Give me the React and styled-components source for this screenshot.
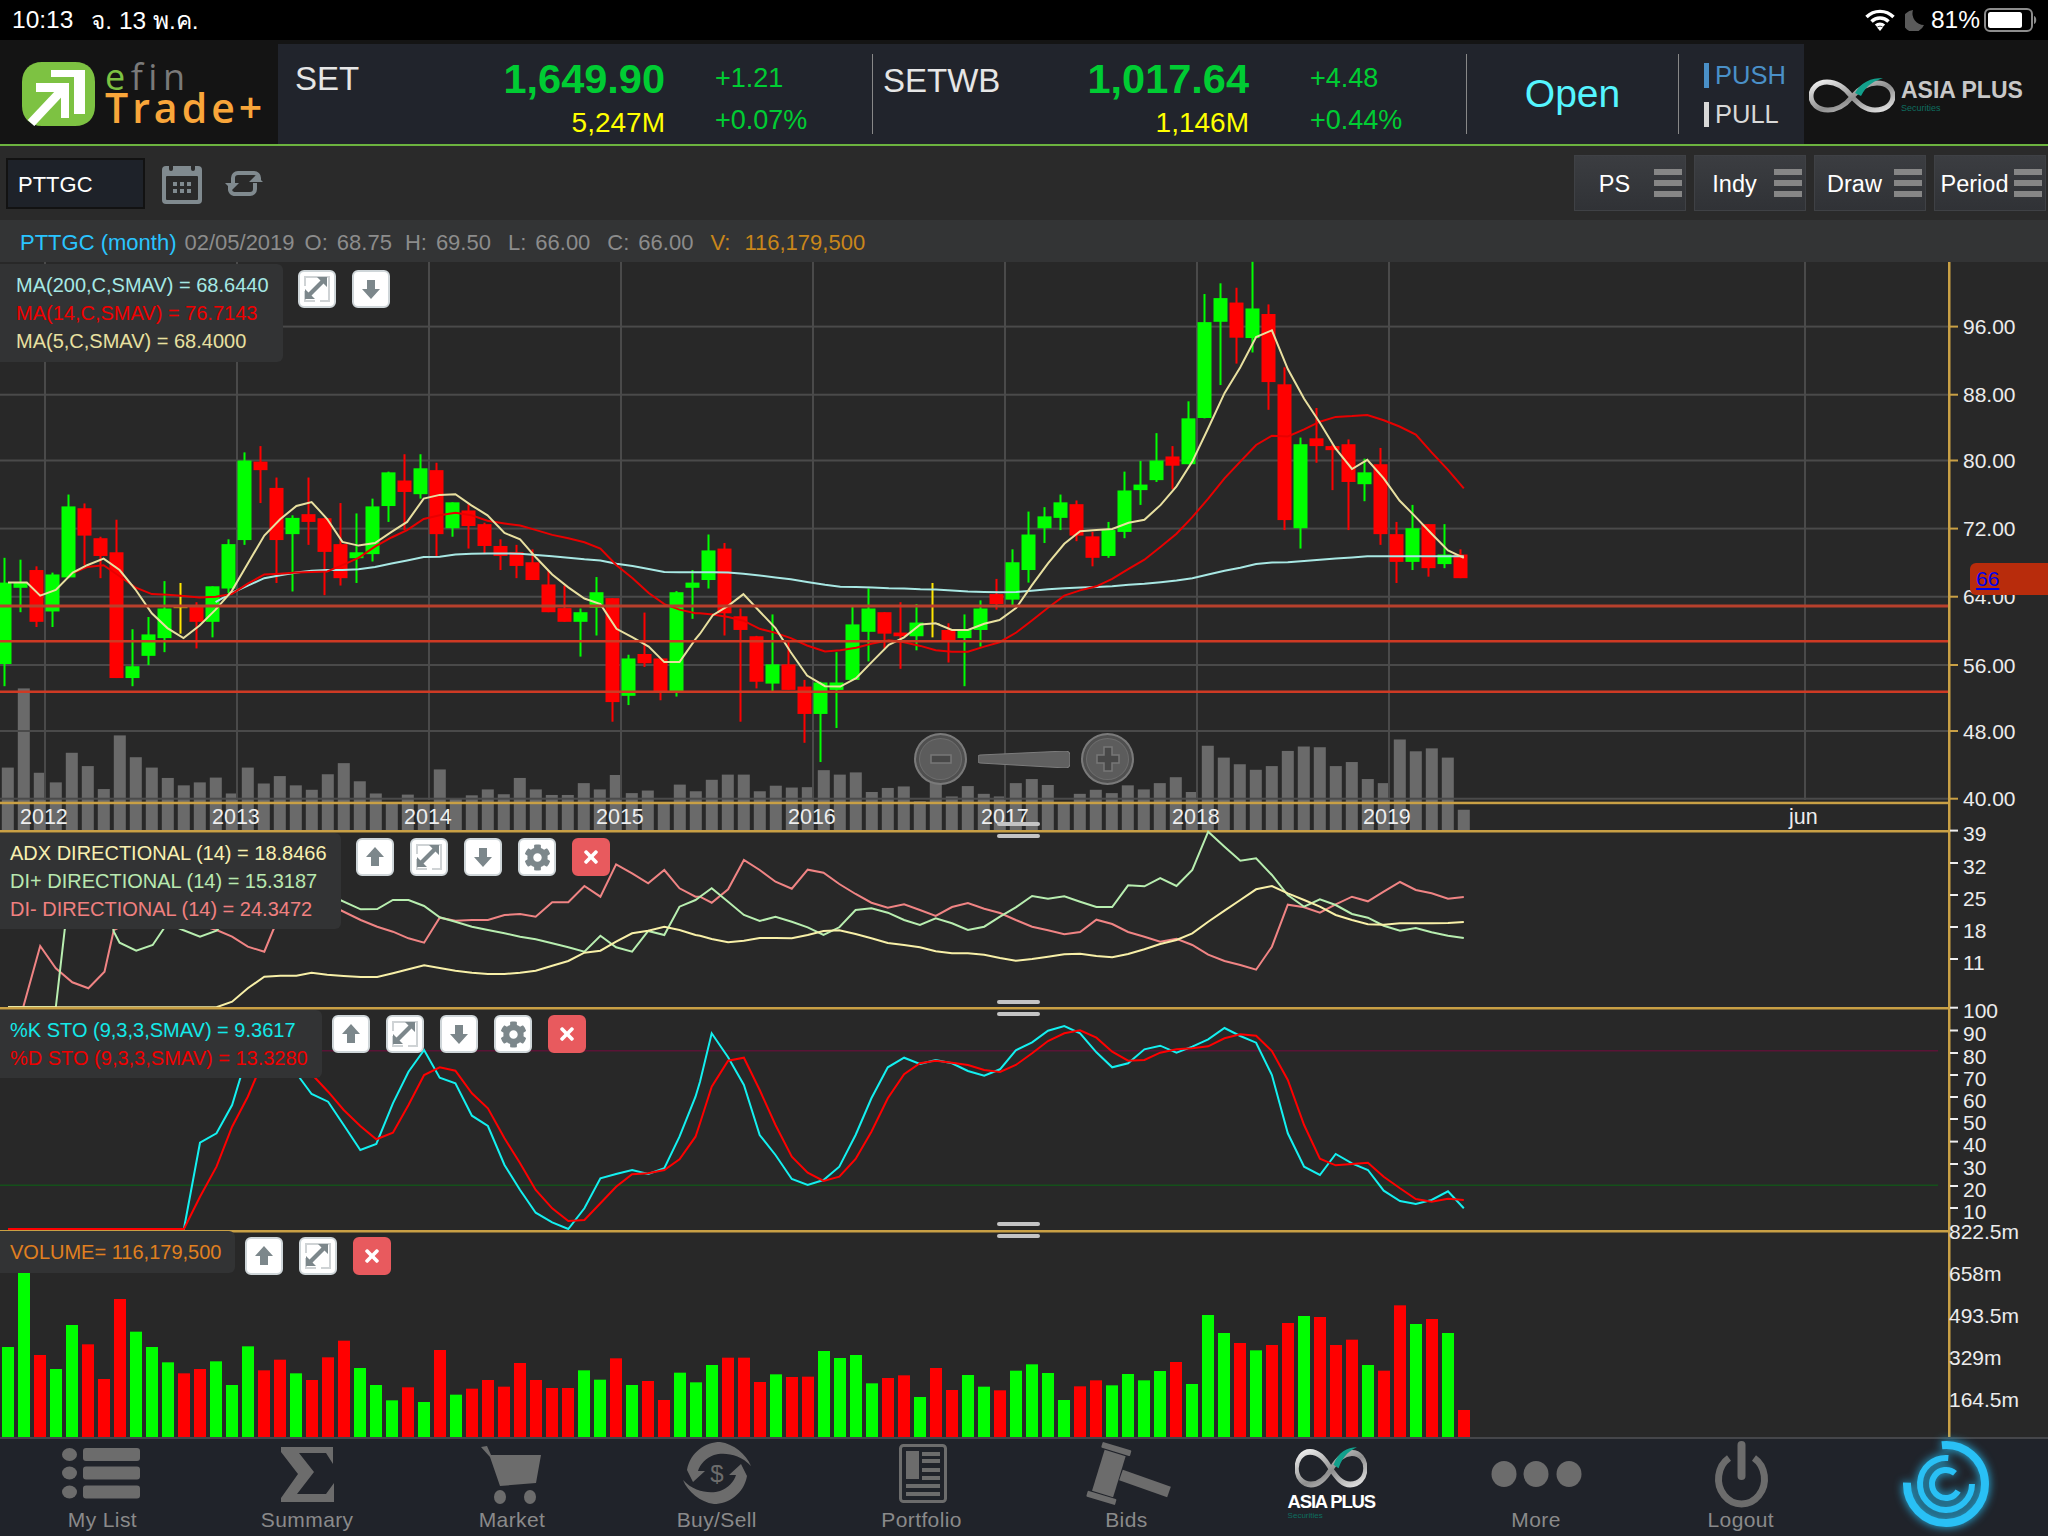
import React from "react";
import styled, { createGlobalStyle } from "styled-components";
import { FaCog, FaTimes } from "react-icons/fa";

const GlobalStyle = createGlobalStyle`
  html, body {
    margin: 0;
    padding: 0;
    background: #000;
  }
  body {
    font-family: "Liberation Sans", "Noto Sans", sans-serif;
  }
`;

/* ---------- chart data, read off the chart in crop units ---------- */

// [colour, wick top, body top, body bottom, wick bottom]
const CANDLES = [
  ["g",805,872,1092,1152],["g",810,872,886,952],["r",828,838,978,992],["g",845,850,950,992],
  ["g",634,666,858,860],["r",658,671,745,825],["r",748,752,800,860],["r",702,790,1130,1130],
  ["g",998,1098,1130,1152],["g",965,1012,1070,1095],["g",868,942,1022,1060],["y",873,939,941,1010],
  ["r",925,935,978,1050],["g",882,882,978,1020],["g",755,768,888,900],["g",520,542,757,770],
  ["r",503,545,568,657],["r",588,616,757,873],["g",690,697,741,896],["r",588,687,708,770],
  ["r",698,698,789,906],["r",657,768,860,880],["g",685,790,806,873],["g",645,666,795,815],
  ["g",572,574,665,708],["r",525,596,627,730],["g",525,563,633,645],["r",548,568,741,800],
  ["g",655,655,725,748],["r",660,677,719,780],["r",710,714,773,795],["r",755,773,800,838],
  ["r",770,790,827,860],["r",782,817,865,865],["r",840,877,952,952],["r",880,941,978,978],
  ["g",942,952,978,1072],["g",857,898,940,1015],["r",914,914,1195,1248],["g",1067,1077,1178,1203],
  ["r",953,1065,1090,1100],["r",1077,1077,1170,1190],["g",895,898,1170,1180],["g",838,872,886,970],
  ["g",742,785,865,888],["r",765,780,955,1015],["r",942,963,1000,1248],["r",1016,1017,1140,1158],
  ["g",958,1093,1145,1165],["r",1030,1093,1162,1162],["r",1135,1153,1227,1305],["g",1140,1142,1227,1357],
  ["g",1060,1142,1162,1265],["g",938,985,1135,1135],["g",888,942,1005,1085],["r",952,952,1010,1050],
  ["r",925,1007,1017,1105],["g",930,980,1017,1055],["y",873,982,984,1020],["r",982,1000,1028,1088],
  ["g",958,998,1022,1152],["g",920,942,1000,1045],["r",862,903,930,945],["g",782,817,918,935],
  ["g",680,742,838,872],["g",668,693,725,765],["g",634,655,697,730],["r",650,660,745,760],
  ["r",735,747,805,828],["g",708,730,800,805],["g",572,623,735,752],["g",543,607,622,662],
  ["g",468,542,595,600],["r",503,531,556,620],["g",382,428,552,552],["g",92,168,427,428],
  ["g",63,103,167,338],["r",75,115,210,280],["g",5,131,211,250],["r",120,146,330,405],
  ["r",290,336,703,730],["g",480,498,725,780],["r",400,482,503,548],["r",498,503,514,622],
  ["r",485,498,600,730],["g",537,574,606,652],["r",508,552,741,770],["r",708,741,816,873],
  ["g",662,725,816,838],["r",714,714,833,856],["g",714,796,822,833],["r",782,796,860,860],
];

const MAIN_VOLUME = [
  1372,1158,1386,1412,1332,1368,1430,1285,1344,1372,1400,1420,1412,1399,1442,1372,1415,1395,1420,1432,1390,1360,
  1409,1442,1470,1445,1470,1377,1456,1447,1431,1444,1400,1431,1446,1446,1414,1431,1392,1441,1434,1470,1418,1436,
  1405,1391,1391,1436,1421,1426,1425,1379,1391,1385,1438,1427,1423,1463,1410,1450,1422,1443,1450,1414,1403,1419,
  1468,1443,1432,1441,1420,1431,1414,1398,1438,1313,1345,1363,1378,1368,1327,1315,1317,1368,1357,1403,1414,1296,
  1328,1320,1345,1486,
];

const VOLUME = [
  ["g",381],["g",158],["r",405],["g",447],["g",315],["r",373],["r",477],["r",237],["g",335],["g",381],["g",427],
  ["r",460],["r",447],["g",424],["g",495],["g",379],["r",451],["r",419],["g",460],["r",480],["r",412],["r",362],
  ["g",444],["g",495],["g",541],["r",502],["g",546],["r",390],["g",524],["r",506],["r",480],["r",500],["r",429],
  ["r",480],["r",504],["r",504],["g",451],["g",479],["r",415],["g",495],["r",483],["r",540],["g",458],["g",487],
  ["g",435],["r",413],["r",413],["r",486],["g",463],["r",471],["r",470],["g",393],["g",414],["g",405],["g",490],
  ["r",474],["r",466],["g",531],["r",444],["r",510],["g",465],["g",500],["r",511],["g",452],["g",433],["g",459],
  ["g",540],["r",499],["r",481],["g",496],["g",462],["g",481],["g",453],["r",426],["g",492],["g",285],["g",339],
  ["r",369],["g",391],["r",375],["r",309],["g",288],["r",291],["r",375],["r",359],["g",435],["r",452],["r",256],
  ["g",312],["r",297],["g",339],["r",570],
];

const MA5_A = [[18,872],[60,872],[90,907],[125,892],[163,845],[195,825],[232,807],[268,838],[303,890],[340,955],[375,995],[411,1022],[447,988],[483,945],[519,895],[555,820],[592,745],[628,700],[664,665],[698,654],[733,700],[767,762],[803,772],[840,765],[877,735],[912,708],[949,645],[985,635],[1020,633],[1056,663],[1092,690],[1130,738],[1165,755],[1201,805],[1237,850],[1273,885],[1309,915],[1345,930],[1381,997],[1417,1020],[1453,1045],[1488,1087],[1522,1087],[1558,1025]];
const MA5_B = [[0,1010],[25,960],[55,935],[85,903],[117,950],[148,995],[178,1060],[210,1123],[245,1152],[275,1153],[306,1130],[338,1085],[370,1040],[400,1020],[432,985],[462,982],[494,1000],[525,1000],[557,983],[587,973],[620,940],[650,880],[682,820],[714,767],[745,733],[777,730],[808,727],[840,710],[871,702],[903,662],[934,612],[965,545],[996,455],[1028,360],[1059,290],[1090,208],[1121,190],[1152,295],[1184,375],[1215,440],[1246,510],[1278,565],[1308,540],[1340,590],[1371,650],[1403,695],[1434,740],[1466,785],[1497,805]];
const MA14_A = [[165,845],[195,830],[232,825],[268,855],[303,885],[340,903],[375,905],[411,908],[447,912],[483,910],[519,903],[555,875],[592,850],[628,848],[664,845],[698,843],[733,842],[767,825],[803,805],[840,775],[877,750],[912,730],[949,700],[985,690],[1020,683],[1056,690],[1092,705],[1130,712],[1165,718],[1201,730],[1237,743],[1273,752],[1309,763],[1345,780],[1381,825],[1417,860],[1453,900],[1488,930],[1522,945],[1558,955]];
const MA14_B = [[0,955],[25,958],[55,965],[85,975],[117,997],[148,1008],[178,1022],[210,1042],[245,1058],[275,1055],[306,1048],[338,1037],[370,1028],[400,1033],[432,1043],[462,1055],[494,1059],[525,1059],[557,1045],[587,1033],[620,1007],[650,975],[682,940],[714,907],[745,893],[777,882],[808,862],[840,835],[871,810],[903,775],[934,740],[965,695],[996,645],[1028,590],[1059,545],[1090,500],[1121,475],[1152,477],[1184,458],[1215,437],[1246,424],[1278,422],[1308,419],[1340,433],[1371,450],[1403,472],[1434,520],[1466,567],[1497,617]];
const MA200_A = [[483,925],[519,900],[555,880],[592,860],[628,852],[664,845],[698,840],[733,838],[767,838],[803,836],[840,830],[877,820],[912,812],[949,803],[985,802],[1020,796],[1056,794],[1092,793],[1130,793],[1165,794],[1201,797],[1237,801],[1273,805],[1309,809],[1345,812],[1381,821],[1417,827],[1453,835],[1488,843],[1522,844],[1558,844]];
const MA200_B = [[0,844],[25,844],[55,845],[85,848],[117,853],[148,858],[178,863],[210,870],[245,878],[275,883],[306,884],[338,885],[370,887],[400,888],[432,890],[462,891],[494,893],[525,896],[557,897],[587,898],[620,897],[650,894],[682,890],[714,887],[745,885],[777,884],[808,882],[840,878],[871,875],[903,871],[934,866],[965,860],[996,850],[1028,840],[1059,832],[1090,822],[1121,818],[1152,817],[1184,814],[1215,810],[1246,807],[1278,804],[1308,801],[1340,801],[1371,801],[1403,801],[1434,801],[1466,801],[1497,801]];

const ADX_A = [[18,562],[485,562],[520,545],[555,505],[592,470],[628,467],[664,467],[698,458],[733,464],[770,468],[808,471],[845,471],[880,460],[915,448],[950,436],[985,444],[1020,452],[1057,458],[1093,462],[1130,462],[1165,458],[1200,452],[1237,437],[1273,423],[1309,398],[1345,392],[1380,365],[1416,340],[1452,332],[1488,320],[1522,330],[1558,345]];
const ADX_B = [[0,347],[23,357],[55,367],[86,362],[117,354],[148,354],[180,355],[211,345],[242,333],[273,331],[305,342],[336,355],[368,369],[400,375],[431,382],[462,394],[494,400],[525,400],[557,404],[588,414],[619,422],[651,417],[682,410],[714,403],[745,401],[777,408],[808,412],[839,402],[871,388],[902,372],[934,360],[965,340],[996,305],[1028,272],[1059,240],[1090,208],[1121,198],[1152,220],[1184,240],[1215,260],[1246,285],[1278,300],[1309,313],[1340,314],[1372,310],[1403,310],[1434,310],[1466,309],[1497,306]];
const DIP_A = [[18,562],[125,562],[145,330],[162,200],[234,200],[255,335],[268,368],[305,392],[342,375],[375,310],[410,330],[448,350],[485,332],[520,280],[600,240],[700,230],[762,240],[808,268],[845,267],[880,240],[915,240],[950,258],[985,292],[1020,305],[1057,320],[1093,330],[1130,340],[1165,350],[1200,358],[1237,370],[1273,382],[1309,395],[1345,347],[1380,382],[1416,395],[1452,333],[1488,345],[1522,260],[1558,240]];
const DIP_B = [[0,230],[23,205],[55,245],[86,285],[117,303],[148,290],[180,305],[211,322],[242,345],[273,322],[305,270],[336,265],[368,278],[400,300],[431,315],[462,295],[494,310],[525,330],[557,320],[588,290],[619,262],[651,228],[682,236],[714,229],[745,245],[777,261],[808,261],[839,196],[871,199],[902,174],[934,198],[965,150],[996,35],[1028,80],[1059,122],[1090,115],[1121,165],[1152,225],[1184,260],[1215,238],[1246,255],[1278,282],[1309,293],[1340,317],[1372,332],[1403,324],[1434,337],[1466,347],[1497,354]];
const DIM_A = [[18,562],[52,562],[90,378],[125,445],[162,487],[198,505],[234,455],[255,330],[330,280],[410,300],[485,330],[520,350],[555,380],[592,395],[612,330],[650,230],[762,270],[808,300],[845,320],[880,335],[915,355],[950,368],[985,293],[1020,302],[1057,300],[1093,300],[1130,285],[1165,282],[1200,290],[1237,247],[1273,247],[1309,198],[1345,230],[1380,133],[1416,160],[1452,190],[1488,150],[1522,205],[1558,230]];
const DIM_B = [[0,230],[23,248],[55,208],[86,120],[117,150],[148,185],[180,206],[211,149],[242,158],[273,192],[305,222],[336,248],[368,263],[400,253],[431,270],[462,288],[494,261],[525,249],[557,266],[588,279],[619,300],[651,320],[682,331],[714,343],[745,336],[777,299],[808,312],[839,336],[871,350],[902,365],[934,356],[965,375],[996,404],[1028,423],[1059,435],[1090,449],[1121,380],[1152,254],[1184,262],[1215,278],[1246,253],[1278,230],[1309,244],[1340,215],[1372,186],[1403,210],[1434,220],[1466,236],[1497,231]];

const STOK_A = [[18,1227],[412,1227],[448,968],[485,940],[520,855],[555,700],[590,620],[640,700],[672,775],[698,822],[735,845],[770,915],[807,990],[843,972],[880,850],[915,755],[950,690],[985,773],[1020,790],[1057,887],[1093,918],[1130,1035],[1165,1110],[1200,1178],[1237,1207],[1273,1227],[1309,1165],[1345,1075],[1380,1062],[1416,1050],[1452,1062],[1488,1045],[1522,950],[1558,830]];
const STOK_B = [[0,785],[23,640],[55,712],[86,795],[117,945],[148,1005],[180,1077],[211,1095],[242,1080],[273,1040],[305,945],[336,835],[368,742],[400,713],[431,732],[462,720],[494,730],[525,753],[557,767],[588,748],[619,691],[651,667],[682,632],[714,618],[745,640],[777,697],[808,742],[839,730],[871,688],[902,677],[934,698],[965,680],[996,658],[1028,624],[1059,648],[1090,668],[1121,765],[1152,940],[1184,1040],[1215,1065],[1246,1002],[1278,1030],[1309,1050],[1340,1112],[1372,1143],[1403,1152],[1434,1140],[1466,1114],[1497,1165]];
const STOD_A = [[18,1227],[412,1227],[448,1130],[485,1040],[520,920],[555,830],[590,720],[640,680],[672,730],[700,765],[735,815],[770,870],[807,918],[843,958],[880,938],[915,855],[950,765],[985,742],[1020,752],[1057,820],[1093,865],[1130,955],[1165,1030],[1200,1110],[1237,1165],[1273,1203],[1309,1200],[1345,1150],[1380,1100],[1416,1063],[1452,1060],[1488,1050],[1522,1018],[1558,950]];
const STOD_B = [[0,910],[23,800],[55,722],[86,713],[117,810],[148,915],[180,1010],[211,1058],[242,1083],[273,1070],[305,1017],[336,935],[368,835],[400,763],[431,730],[462,722],[494,728],[525,735],[557,750],[588,756],[619,735],[651,700],[682,663],[714,640],[745,631],[777,653],[808,695],[839,722],[871,720],[902,698],[934,688],[965,685],[996,679],[1028,655],[1059,643],[1090,647],[1121,693],[1152,780],[1184,915],[1215,1016],[1246,1036],[1278,1032],[1309,1028],[1340,1070],[1372,1105],[1403,1137],[1434,1145],[1466,1136],[1497,1140]];

const COLORS = { g: "#00ff00", r: "#ff0000", y: "#ffe600" };
const AXIS_X = 1949;
const GOLD = "#c9a045";

const mainY = v => 260 + v / 2.703;
const lowerY = v => 820 + v / 3;
const line = (left, right, toY) =>
  [
    ...left.map(([x, y]) => `${(x / 2.24).toFixed(1)},${toY(y).toFixed(1)}`),
    ...right.map(([x, y]) => `${(700 + x / 1.96).toFixed(1)},${toY(y).toFixed(1)}`),
  ].join(" ");

const PRICE_TICKS = [
  ["96.00", 326.6], ["88.00", 394.7], ["80.00", 460.5], ["72.00", 528.6],
  ["64.00", 596.7], ["56.00", 665], ["48.00", 731], ["40.00", 798.7],
];
const YEARS = [
  ["2012", 45, 20], ["2013", 237, 212], ["2014", 429, 404], ["2015", 621, 596],
  ["2016", 813, 788], ["2017", 1005, 981], ["2018", 1197, 1172], ["2019", 1389, 1363], ["jun", 1805, 1789],
];
const ADX_TICKS = [["39", 830.6], ["32", 863], ["25", 895], ["18", 927], ["11", 959]];
const STO_TICKS = [
  ["100", 1007.7], ["90", 1030.5], ["80", 1053], ["70", 1075], ["60", 1097],
  ["50", 1119], ["40", 1141.6], ["30", 1164], ["20", 1186], ["10", 1208],
];
const VOL_TICKS = [["822.5m", 1231], ["658m", 1273], ["493.5m", 1315], ["329m", 1357], ["164.5m", 1399]];

/* ---------- page ---------- */

const Page = styled.div`
  width: 2048px;
  height: 1536px;
  display: flex;
  flex-direction: column;
  overflow: hidden;
  background: #282828;
`;

const StatusBar = styled.div`
  flex: none;
  height: 40px;
  background: #000;
  color: #fff;
  font-size: 24.5px;
  display: flex;
  align-items: center;
  justify-content: space-between;
  padding: 0 10px 0 12px;
`;

const StatusGroup = styled.div`
  display: flex;
  align-items: center;
  gap: ${p => p.$gap}px;
`;

const BatteryLevel = styled.span`
  margin-right: -3px;
`;

const WifiSlot = styled.span`
  display: flex;
  margin-right: 3px;
`;

const Header = styled.div`
  flex: none;
  height: 104px;
  background: #141414;
  border-bottom: 2px solid #6cb33f;
  display: flex;
  align-items: flex-end;
`;

const LogoBlock = styled.div`
  width: 278px;
  height: 104px;
  flex: none;
  display: flex;
  align-items: center;
  gap: 10px;
  padding: 3px 0 0 22px;
  box-sizing: border-box;
`;

const Wordmark = styled.div`
  display: flex;
  flex-direction: column;
  font-family: "Open Sans", sans-serif;
`;

const WordEfin = styled.div`
  font-size: 36px;
  line-height: 27px;
  letter-spacing: 5.5px;
  color: #7a7a7a;
  span {
    color: #7dc242;
  }
`;

const WordTrade = styled.div`
  font-size: 41px;
  line-height: 34px;
  font-weight: 600;
  letter-spacing: 4px;
  color: #f9a63a;
  white-space: nowrap;
`;

const TickerPanel = styled.div`
  width: 1526px;
  height: 100px;
  flex: none;
  background: #21242c;
  display: flex;
  align-items: center;
`;

const IndexBlock = styled.div`
  width: ${p => p.$width}px;
  height: 80px;
  flex: none;
  box-sizing: border-box;
  border-right: 1px solid #888;
  padding-left: ${p => p.$pad}px;
  display: grid;
  grid-template-columns: ${p => p.$valueEnd - p.$pad}px 1fr;
  grid-template-rows: 48px 32px;
  column-gap: ${p => 437 - p.$valueEnd}px;
  align-items: center;
`;

const NameRow = styled.div`
  display: flex;
  justify-content: space-between;
  align-items: center;
  padding-top: 1px;
`;

const IndexName = styled.div`
  color: #e6e6e6;
  font-size: 33px;
  margin-top: ${p => p.$drop || 0}px;
`;

const IndexValue = styled.div`
  color: #00cc33;
  font-size: 41.5px;
  font-weight: bold;
`;

const IndexChange = styled.div`
  color: #00cc33;
  font-size: 27px;
  margin-top: ${p => p.$top || 0}px;
`;

const IndexTurnover = styled.div`
  color: #ffff00;
  font-size: 28px;
  text-align: right;
  margin-top: 10px;
`;

const MarketState = styled.div`
  width: 212px;
  height: 80px;
  flex: none;
  box-sizing: border-box;
  border-right: 1px solid #888;
  display: flex;
  align-items: center;
  justify-content: center;
  color: #55f5ff;
  font-size: 39px;
`;

const FeedStack = styled.div`
  flex: 1;
  height: 80px;
  display: flex;
  flex-direction: column;
  justify-content: space-between;
  padding: 8px 0 7px 25px;
  box-sizing: border-box;
`;

const FeedMode = styled.div`
  display: flex;
  align-items: center;
  gap: 6px;
  font-size: 25.5px;
  height: 26px;
  color: ${p => p.$color};
  &::before {
    content: "";
    width: 5px;
    height: 25px;
    background: ${p => p.$color};
  }
`;

const Broker = styled.div`
  flex: 1;
  height: 100px;
  display: flex;
  align-items: center;
  gap: 6px;
  padding: 2px 0 0 5px;
  box-sizing: border-box;
`;

const BrokerText = styled.div`
  display: flex;
  flex-direction: column;
  color: #c8c8c8;
  font-size: 23px;
  font-weight: bold;
  white-space: nowrap;
`;

const Securities = styled.span`
  color: #0e6e60;
  font-size: ${p => p.$size || 9}px;
  line-height: ${p => p.$size || 9}px;
  font-weight: normal;
  letter-spacing: 0;
`;

const Toolbar = styled.div`
  flex: none;
  height: 74px;
  background: #2a2a2a;
  display: flex;
  align-items: center;
  padding: 0 2px 0 6px;
`;

const SymbolBox = styled.div`
  width: 139px;
  height: 51px;
  box-sizing: border-box;
  background: #1e2229;
  border: 2px solid #121212;
  color: #fff;
  font-size: 22px;
  display: flex;
  align-items: center;
  padding: 3px 0 0 10px;
`;

const ToolIcon = styled.div`
  display: flex;
  margin-left: ${p => p.$left}px;
`;

const ToolGroup = styled.div`
  margin-left: auto;
  display: flex;
  gap: 8px;
`;

const ToolButton = styled.div`
  width: 112px;
  height: 56px;
  box-sizing: border-box;
  background: linear-gradient(#3b3d41, #303236);
  border: 1px solid #3f4145;
  display: flex;
  align-items: center;
  padding-right: 3px;
  color: #fff;
  font-size: 23.5px;
`;

const ToolLabel = styled.span`
  flex: 1;
  text-align: center;
  padding-top: 2px;
`;

const Burger = styled.div`
  width: 28px;
  display: flex;
  flex-direction: column;
  gap: 5px;
  i {
    display: block;
    height: 6px;
    background: #868686;
  }
`;

const InfoStrip = styled.div`
  flex: none;
  height: 42px;
  box-sizing: border-box;
  background: #333435;
  display: flex;
  align-items: center;
  gap: 10px;
  padding: 3px 0 0 20px;
  font-size: 22px;
  color: #8c8c8c;
  white-space: nowrap;
`;

const InfoTitle = styled.span`
  color: #2ac4ff;
  font-size: 22px;
  margin-right: -2px;
`;

const InfoField = styled.span`
  display: flex;
  gap: ${p => p.$gap || 9}px;
  margin-left: ${p => p.$left || 0}px;
  color: ${p => p.$color || "inherit"};
`;

const Pane = styled.div`
  flex: none;
  position: relative;
  height: ${p => p.$height}px;
`;

const ChartSvg = styled.svg`
  display: block;
  width: 2048px;
  height: 100%;
  overflow: visible;
  font-family: "Liberation Sans", sans-serif;
`;

const Legend = styled.div`
  position: absolute;
  left: 0;
  top: ${p => p.$top}px;
  padding: ${p => p.$vpad}px 14px ${p => p.$vpad}px ${p => p.$pad}px;
  background: #323334;
  border-radius: 0 6px 6px 0;
  font-size: 20px;
  line-height: 28px;
  white-space: nowrap;
`;

const LegendLine = styled.div`
  color: ${p => p.$color};
`;

const PaneButtons = styled.div`
  position: absolute;
  left: ${p => p.$left}px;
  top: ${p => p.$top}px;
  display: flex;
  gap: 16px;
`;

const PaneButton = styled.div`
  width: 38px;
  height: 38px;
  box-sizing: border-box;
  border-radius: 6px;
  border: 2px solid ${p => (p.$danger ? "#e85a5e" : "#cfd6d9")};
  background: ${p => (p.$danger ? "#e85a5e" : "#fff")};
  color: ${p => (p.$danger ? "#fff" : "#7c878b")};
  display: flex;
  align-items: center;
  justify-content: center;
`;

const PriceTag = styled.div`
  position: absolute;
  left: 1970px;
  top: 301px;
  width: 78px;
  height: 32px;
  box-sizing: border-box;
  padding-left: 6px;
  background: #b82c0c;
  border-radius: 6px 0 0 6px;
  display: flex;
  align-items: center;
  font-size: 21px;
  a {
    color: #0000ee;
  }
`;

const ZoomControl = styled.div`
  position: absolute;
  left: 914px;
  top: 471px;
  display: flex;
  align-items: center;
  gap: 11px;
`;

const ZoomButton = styled.div`
  width: 53px;
  height: 52px;
  box-sizing: border-box;
  border-radius: 50%;
  background: #5c5c5c;
  border: 2px solid #7a7a7a;
  box-shadow: inset 0 0 0 3px #505050, inset 0 0 0 4px #6c6c6c;
  display: flex;
  align-items: center;
  justify-content: center;
`;

const Nav = styled.div`
  flex: 1;
  background: #20232a;
  border-top: 2px solid #45464a;
  box-sizing: border-box;
  display: grid;
  grid-template-columns: repeat(10, 1fr);
`;

const NavItem = styled.div`
  display: flex;
  flex-direction: column;
  align-items: center;
  padding-top: 1px;
  color: #8a8a8a;
  font-size: 21px;
  letter-spacing: 0.4px;
`;

const NavIcon = styled.svg`
  display: block;
  width: 90px;
  height: 66px;
  overflow: visible;
  flex: none;
  color: #6c6c6c;
`;

const NavLabel = styled.span`
  margin-top: 2px;
  line-height: 24px;
`;

const NavMarkBox = styled.div`
  margin-top: 6px;
  height: 42px;
`;

const NavBrand = styled.div`
  display: flex;
  flex-direction: column;
  align-items: flex-start;
  margin-top: 3px;
  color: #fff;
  font-size: 18.5px;
  font-weight: bold;
  letter-spacing: -1.2px;
  line-height: 21px;
  white-space: nowrap;
`;

const Swirl = styled.svg`
  display: block;
  width: 90px;
  height: 88px;
  margin-left: -2px;
  filter: drop-shadow(0 0 5px #29c0f5);
`;

/* ---------- small drawings ---------- */

const WifiIcon = () => (
  <svg width="30" height="22" viewBox="0 0 30 22" fill="none" stroke="#fff" strokeWidth="3.4">
    <path d="M1.5 8 A19 19 0 0 1 28.5 8" />
    <path d="M6.5 12.5 A12 12 0 0 1 23.5 12.5" />
    <path d="M11 16.8 A6 6 0 0 1 19 16.8" />
    <path d="M15 22 L12 18.6 A5 5 0 0 1 18 18.6 Z" fill="#fff" stroke="none" />
  </svg>
);

const MoonIcon = () => (
  <svg width="19" height="22" viewBox="0 0 19 22">
    <path d="M8 1 A11 11 0 1 0 19 16 A11.5 11.5 0 0 1 8 1 Z" fill="#5a5a5a" />
  </svg>
);

const BatteryIcon = () => (
  <svg width="54" height="24" viewBox="0 0 54 24">
    <rect x="1" y="1" width="47" height="22" rx="5" fill="none" stroke="#8c8c8c" strokeWidth="2" />
    <rect x="4" y="4" width="34" height="16" rx="2.5" fill="#fff" />
    <path d="M50 8 C53 9 53 15 50 16 Z" fill="#8c8c8c" />
  </svg>
);

const ShieldLogo = () => (
  <svg width="73" height="64" viewBox="0 0 73 64" style={{ flex: "none" }}>
    <path
      d="M20 0 H53 C66 0 73 8 73 20 V44 C73 56 66 64 53 64 H20 C8 64 0 56 0 44 V20 C0 8 8 0 20 0 Z"
      fill="#7dc242"
    />
    <path d="M29 8 H63 V52 H52 V15 H29 Z" fill="#fff" />
    <path d="M14 21 H47 V56 H39 V30 H14 Z" fill="#fff" />
    <path d="M9 61 L42 26" stroke="#fff" strokeWidth="9" />
  </svg>
);

const InfinityMark = ({ id, width, height }) => (
  <svg width={width} height={height} viewBox="0 0 86 36" preserveAspectRatio="none" style={{ flex: "none", display: "block" }}>
    <defs>
      <linearGradient id={id} x1="0" y1="0" x2="1" y2="1">
        <stop offset="0" stopColor="#f2f2f2" />
        <stop offset="0.55" stopColor="#8e8e8e" />
        <stop offset="1" stopColor="#e6e6e6" />
      </linearGradient>
    </defs>
    <path
      d="M43 20 C34 8 26 5 18 5 C8 5 2 12 2 19 C2 27 9 33 19 33 C30 33 38 26 43 20 C49 13 57 6 68 6 C78 6 84 12 84 19 C84 27 77 33 66 33 C56 33 50 27 43 20 Z"
      fill="none"
      stroke={`url(#${id})`}
      strokeWidth="5"
    />
    <path d="M46 16 C52 5 62 1 74 1 C66 4 58 7 52 19 Z" fill="#12a08c" />
  </svg>
);

const CalendarIcon = () => (
  <svg width="40" height="41" viewBox="0 0 40 41" fill="#808a8f">
    <path d="M4 3 H36 A4 4 0 0 1 40 7 V37 A4 4 0 0 1 36 41 H4 A4 4 0 0 1 0 37 V7 A4 4 0 0 1 4 3 Z" />
    <rect x="4" y="13" width="32" height="24" rx="1" fill="#2a2a2a" />
    <rect x="7" y="0" width="4" height="8" rx="2" fill="#2a2a2a" />
    <rect x="29" y="0" width="4" height="8" rx="2" fill="#2a2a2a" />
    {[11, 18, 25].map(x =>
      [19, 26].map(y => <rect key={`${x}-${y}`} x={x} y={y} width="4" height="4" />)
    )}
  </svg>
);

const RefreshIcon = () => (
  <svg width="38" height="27" viewBox="0 0 38 27" fill="none" stroke="#808a8f" strokeWidth="4">
    <path d="M8 14 V8 A5 5 0 0 1 13 3 H29 A5 5 0 0 1 34 8 V12" />
    <path d="M30 13 V19 A5 5 0 0 1 25 24 H9 A5 5 0 0 1 5 20 V16" />
    <path d="M0 13 H14 L7 20 Z M24 12 H38 L31 5 Z" fill="#808a8f" stroke="none" />
  </svg>
);

const ArrowUp = ({ down }) => (
  <svg width="24" height="24" viewBox="0 0 24 24" fill="currentColor" transform={down ? "rotate(180)" : undefined}>
    <path d="M12 2 L21 12 H16 V21 H8 V12 H3 Z" />
  </svg>
);

const ExpandIcon = () => (
  <svg width="30" height="30" viewBox="0 0 30 30">
    <path d="M3 12 V3 H27 V27 H18 M3 17 V27 H13" fill="none" stroke="#cfd3d5" strokeWidth="2" />
    <path d="M25 3 V13 L21.5 9.5 L9.5 21.5 L13 25 H3 V15 L6.5 18.5 L18.5 6.5 L15 3 Z" fill="currentColor" />
  </svg>
);

const ExpandButtons = ({ left, top, up, down, gear, close = true }) => (
  <PaneButtons $left={left} $top={top}>
    {up && (
      <PaneButton>
        <ArrowUp />
      </PaneButton>
    )}
    <PaneButton>
      <ExpandIcon />
    </PaneButton>
    {down && (
      <PaneButton>
        <ArrowUp down />
      </PaneButton>
    )}
    {gear && (
      <PaneButton>
        <FaCog size={27} />
      </PaneButton>
    )}
    {close && (
      <PaneButton $danger>
        <FaTimes size={20} />
      </PaneButton>
    )}
  </PaneButtons>
);

const arc = (cx, cy, r, a0, a1) => {
  const rad = a => ((a - 90) * Math.PI) / 180;
  const x = a => (cx + r * Math.cos(rad(a))).toFixed(1);
  const y = a => (cy + r * Math.sin(rad(a))).toFixed(1);
  return `M${x(a0)} ${y(a0)} A${r} ${r} 0 ${a1 - a0 > 180 ? 1 : 0} 1 ${x(a1)} ${y(a1)}`;
};

const PaneHandle = ({ y }) => <rect x="997" y={y - 2} width="43" height="4" rx="2" fill="#c4c4c4" />;

const AxisLabels = ({ ticks, tickColor, offset = 0 }) => (
  <g fill="#ececec" fontSize="21">
    {ticks.map(([label, y]) => (
      <g key={label}>
        <rect x={AXIS_X + 1} y={y - 1} width="8" height="2" fill={tickColor} />
        <text x={AXIS_X + 14} y={y + offset} dominantBaseline="central">
          {label}
        </text>
      </g>
    ))}
  </g>
);

const GoldFrame = ({ top, bottom, rule }) => (
  <g fill={GOLD}>
    <rect x={AXIS_X - 1} y={top} width="2.5" height={bottom - top} />
    {rule.map(y => (
      <rect key={y} x="0" y={y - 1} width={AXIS_X} height="2.5" />
    ))}
  </g>
);

const MainChart = () => (
  <ChartSvg viewBox="0 262 2048 569" preserveAspectRatio="none">
    {MAIN_VOLUME.map((top, k) => (
      <rect key={k} x={1.8 + 16 * k} y={mainY(top)} width="12" height={831 - mainY(top)} fill="#6a6a6a" />
    ))}
    {PRICE_TICKS.map(([, y]) => (
      <rect key={y} x="0" y={y - 1} width={AXIS_X} height="2" fill="#4a4a4a" />
    ))}
    {YEARS.map(([label, x]) => (
      <rect key={label} x={x - 1} y="262" width="2" height="538" fill="#4a4a4a" />
    ))}
    {CANDLES.map(([c, wt, bt, bb, wb], i) => {
      const x = 4.5 + 16 * i;
      return (
        <g key={i} fill={COLORS[c]}>
          <rect x={x - 1} y={mainY(wt)} width="2" height={(wb - wt) / 2.703} />
          <rect x={x - 7} y={mainY(bt)} width="14" height={(bb - bt) / 2.703} />
        </g>
      );
    })}
    <g fill="none" strokeWidth="2">
      <polyline points={line(MA200_A, MA200_B, mainY)} stroke="#a8e8e4" />
      <polyline points={line(MA14_A, MA14_B, mainY)} stroke="#e80000" />
      <polyline points={line(MA5_A, MA5_B, mainY)} stroke="#e8e0a0" />
    </g>
    <g fill="#cf3a24">
      <rect x="0" y="604.5" width={AXIS_X} height="3" fill="#b8402c" />
      <rect x="0" y="640" width={AXIS_X} height="2.5" />
      <rect x="0" y="690.5" width={AXIS_X} height="2.5" />
    </g>
    <GoldFrame top={262} bottom={831} rule={[802.7, 831]} />
    <AxisLabels ticks={PRICE_TICKS} tickColor={GOLD} />
    <g fill="#eee" fontSize="21.5">
      {YEARS.map(([label, , x]) => (
        <text key={label} x={x} y="817" dominantBaseline="central">
          {label}
        </text>
      ))}
    </g>
    <PaneHandle y={824} />
  </ChartSvg>
);

const AdxChart = () => (
  <ChartSvg viewBox="0 831 2048 177" preserveAspectRatio="none">
    <g fill="none" strokeWidth="2">
      <polyline points={line(DIM_A, DIM_B, lowerY)} stroke="#f08484" />
      <polyline points={line(DIP_A, DIP_B, lowerY)} stroke="#b8eeb0" />
      <polyline points={line(ADX_A, ADX_B, lowerY)} stroke="#f8f0a8" />
    </g>
    <GoldFrame top={831} bottom={1008} rule={[1008]} />
    <AxisLabels ticks={ADX_TICKS} tickColor="#eee" offset={3} />
    <PaneHandle y={836} />
    <PaneHandle y={1002} />
  </ChartSvg>
);

const StoChart = () => (
  <ChartSvg viewBox="0 1008 2048 223" preserveAspectRatio="none">
    <rect x="0" y="1050" width="1938" height="1.5" fill="#5a1436" />
    <rect x="0" y="1184.5" width="1938" height="1.5" fill="#14501a" />
    <g fill="none" strokeWidth="2">
      <polyline points={line(STOK_A, STOK_B, lowerY)} stroke="#14f0f0" />
      <polyline points={line(STOD_A, STOD_B, lowerY)} stroke="#ff0000" />
    </g>
    <GoldFrame top={1008} bottom={1231} rule={[1231]} />
    <AxisLabels ticks={STO_TICKS} tickColor="#eee" offset={3} />
    <PaneHandle y={1014} />
    <PaneHandle y={1224} />
  </ChartSvg>
);

const VolumeChart = () => (
  <ChartSvg viewBox="0 1231 2048 206" preserveAspectRatio="none">
    {VOLUME.map(([c, v], k) => {
      const top = 1220 + v / 3;
      return <rect key={k} x={2 + 16 * k} y={top} width="12" height={1437 - top} fill={COLORS[c]} />;
    })}
    <GoldFrame top={1231} bottom={1437} rule={[]} />
    <g fill="#ececec" fontSize="21">
      {VOL_TICKS.map(([label, y]) => (
        <text key={label} x={AXIS_X} y={y} dominantBaseline="central">
          {label}
        </text>
      ))}
    </g>
    <PaneHandle y={1236} />
  </ChartSvg>
);

const CRESCENT = "M15 30 C18 12 34 2 48 2 C62 4 74 14 79 26 C68 14 52 12 42 15 C34 18 28 24 26 31 L33 31 L21 42 Z";

const NAV_ICONS = {
  list: (
    <>
      {[14.5, 33, 52].map(y => (
        <g key={y} fill="currentColor">
          <ellipse cx="12.5" cy={y} rx="7.5" ry="6.5" />
          <rect x="26" y={y - 6.5} width="57" height="13" rx="3" />
        </g>
      ))}
    </>
  ),
  sigma: <path d="M19 7 H71 V24 L64 13 H37 L52 32 L35 54 H64 L72 43 V62 H19 V58 L36 34 L19 12 Z" fill="currentColor" />,
  cart: (
    <g fill="currentColor">
      <path d="M14 7 L20 6 L24 15 H74 L69 43 L33 46 L23 17 Z" />
      <ellipse cx="33" cy="57" rx="6" ry="7" />
      <ellipse cx="63" cy="57" rx="6" ry="7" />
    </g>
  ),
  exchange: (
    <g fill="currentColor">
      <path d={CRESCENT} />
      <path d={CRESCENT} transform="rotate(180 45 33)" />
      <text x="45" y="33" fontSize="24" textAnchor="middle" dominantBaseline="central" fontFamily="Liberation Sans, sans-serif">
        $
      </text>
    </g>
  ),
  news: (
    <g fill="currentColor">
      <rect x="23.5" y="5.5" width="45" height="56" rx="3" fill="none" stroke="currentColor" strokeWidth="3" />
      <rect x="29" y="11" width="13" height="28" />
      {[12, 19, 28, 36].map(y => (
        <rect key={y} x="45" y={y} width="18" height="4" />
      ))}
      <rect x="29" y="44" width="34" height="4" />
      <rect x="29" y="52" width="34" height="4" />
    </g>
  ),
  gavel: (
    <g fill="currentColor">
      <g transform="rotate(17 28 33)">
        <rect x="17" y="12" width="22" height="43" />
        <rect x="13" y="5" width="30" height="6" rx="1" />
        <rect x="13" y="56" width="30" height="6" rx="1" />
      </g>
      <path d="M40 35 L88 52" stroke="currentColor" strokeWidth="11" />
    </g>
  ),
  dots: (
    <g fill="currentColor">
      <ellipse cx="13" cy="34" rx="12.5" ry="13" />
      <ellipse cx="45" cy="34" rx="12.5" ry="13" />
      <ellipse cx="78" cy="34" rx="12.5" ry="13" />
    </g>
  ),
  power: (
    <g fill="none" stroke="currentColor">
      <path d="M33 18 A23 25 0 1 0 58 18" strokeWidth="7" />
      <path d="M45.5 5 V36" strokeWidth="8" strokeLinecap="round" />
    </g>
  ),
};

const NAV_ITEMS = [
  ["My List", "list"],
  ["Summary", "sigma"],
  ["Market", "cart"],
  ["Buy/Sell", "exchange"],
  ["Portfolio", "news"],
  ["Bids", "gavel"],
  null,
  ["More", "dots"],
  ["Logout", "power"],
];

const IndexInfo = ({ name, value, turnover, change, percent, width, pad, valueEnd, drop }) => (
  <IndexBlock $width={width} $pad={pad} $valueEnd={valueEnd}>
    <NameRow>
      <IndexName $drop={drop}>{name}</IndexName>
      <IndexValue>{value}</IndexValue>
    </NameRow>
    <IndexChange>{change}</IndexChange>
    <IndexTurnover>{turnover}</IndexTurnover>
    <IndexChange $top={4}>{percent}</IndexChange>
  </IndexBlock>
);

const App = () => (
  <Page>
    <GlobalStyle />
    <StatusBar>
      <StatusGroup $gap={18}>
        <span>10:13</span>
        <span>จ. 13 พ.ค.</span>
      </StatusGroup>
      <StatusGroup $gap={7}>
        <WifiSlot>
          <WifiIcon />
        </WifiSlot>
        <MoonIcon />
        <BatteryLevel>81%</BatteryLevel>
        <BatteryIcon />
      </StatusGroup>
    </StatusBar>

    <Header>
      <LogoBlock>
        <ShieldLogo />
        <Wordmark>
          <WordEfin>
            <span>e</span>fin
          </WordEfin>
          <WordTrade>Trade+</WordTrade>
        </Wordmark>
      </LogoBlock>
      <TickerPanel>
        <IndexInfo name="SET" value="1,649.90" turnover="5,247M" change="+1.21" percent="+0.07%" width={595} pad={17} valueEnd={387} />
        <IndexInfo name="SETWB" value="1,017.64" turnover="1,146M" change="+4.48" percent="+0.44%" width={594} pad={10} valueEnd={376} drop={4} />
        <MarketState>Open</MarketState>
        <FeedStack>
          <FeedMode $color="#4a90c8">PUSH</FeedMode>
          <FeedMode $color="#d8d8d8">PULL</FeedMode>
        </FeedStack>
      </TickerPanel>
      <Broker>
        <InfinityMark id="brokerMark" width={86} height={36} />
        <BrokerText>
          ASIA PLUS
          <Securities>Securities</Securities>
        </BrokerText>
      </Broker>
    </Header>

    <Toolbar>
      <SymbolBox>PTTGC</SymbolBox>
      <ToolIcon $left={17}>
        <CalendarIcon />
      </ToolIcon>
      <ToolIcon $left={23}>
        <RefreshIcon />
      </ToolIcon>
      <ToolGroup>
        {["PS", "Indy", "Draw", "Period"].map(label => (
          <ToolButton key={label}>
            <ToolLabel>{label}</ToolLabel>
            <Burger>
              <i />
              <i />
              <i />
            </Burger>
          </ToolButton>
        ))}
      </ToolGroup>
    </Toolbar>

    <InfoStrip>
      <InfoTitle>PTTGC (month)</InfoTitle>
      <span>02/05/2019</span>
      <InfoField>
        <span>O:</span>
        <span>68.75</span>
      </InfoField>
      <InfoField $left={3}>
        <span>H:</span>
        <span>69.50</span>
      </InfoField>
      <InfoField $left={7}>
        <span>L:</span>
        <span>66.00</span>
      </InfoField>
      <InfoField $left={7}>
        <span>C:</span>
        <span>66.00</span>
      </InfoField>
      <InfoField $left={7} $gap={14} $color="#c9861a">
        <span>V:</span>
        <span>116,179,500</span>
      </InfoField>
    </InfoStrip>

    <Pane $height={569}>
      <MainChart />
      <Legend $top={2} $vpad={7} $pad={16}>
        <LegendLine $color="#a5e8e4">MA(200,C,SMAV) = 68.6440</LegendLine>
        <LegendLine $color="#f00000">MA(14,C,SMAV) = 76.7143</LegendLine>
        <LegendLine $color="#e8e0a0">MA(5,C,SMAV) = 68.4000</LegendLine>
      </Legend>
      <ExpandButtons left={298} top={8} down close={false} />
      <PriceTag>
        <a href="#66">66</a>
      </PriceTag>
      <ZoomControl>
        <ZoomButton>
          <svg width="22" height="10" viewBox="0 0 22 10">
            <rect x="1" y="1" width="20" height="8" fill="#484848" stroke="#777" strokeWidth="1.5" />
          </svg>
        </ZoomButton>
        <svg width="92" height="17" viewBox="0 0 92 17">
          <path d="M2 4 L88 0 Q92 0 92 4 V13 Q92 17 88 17 L2 12 Q0 12 0 10 V6 Q0 4 2 4 Z" fill="#606060" stroke="#7c7c7c" />
        </svg>
        <ZoomButton>
          <svg width="24" height="26" viewBox="0 0 24 26">
            <path d="M8 1 H16 V9 H23 V17 H16 V25 H8 V17 H1 V9 H8 Z" fill="#484848" stroke="#777" strokeWidth="1.5" />
          </svg>
        </ZoomButton>
      </ZoomControl>
    </Pane>

    <Pane $height={177}>
      <AdxChart />
      <Legend $top={2} $vpad={6} $pad={10}>
        <LegendLine $color="#f8f0b0">ADX DIRECTIONAL (14) = 18.8466</LegendLine>
        <LegendLine $color="#b8e8b0">DI+ DIRECTIONAL (14) = 15.3187</LegendLine>
        <LegendLine $color="#f08080">DI- DIRECTIONAL (14) = 24.3472</LegendLine>
      </Legend>
      <ExpandButtons left={356} top={7} up down gear />
    </Pane>

    <Pane $height={223}>
      <StoChart />
      <Legend $top={2} $vpad={6} $pad={10}>
        <LegendLine $color="#14e8e8">%K STO (9,3,3,SMAV) = 9.3617</LegendLine>
        <LegendLine $color="#f00000">%D STO (9,3,3,SMAV) = 13.3280</LegendLine>
      </Legend>
      <ExpandButtons left={332} top={7} up down gear />
    </Pane>

    <Pane $height={206}>
      <VolumeChart />
      <Legend $top={0} $vpad={7} $pad={10}>
        <LegendLine $color="#e08020">VOLUME= 116,179,500</LegendLine>
      </Legend>
      <ExpandButtons left={245} top={6} up />
    </Pane>

    <Nav>
      {NAV_ITEMS.map((item, i) =>
        item ? (
          <NavItem key={item[0]}>
            <NavIcon viewBox="0 0 90 66">{NAV_ICONS[item[1]]}</NavIcon>
            <NavLabel>{item[0]}</NavLabel>
          </NavItem>
        ) : (
          <NavItem key={i}>
            <NavMarkBox>
              <InfinityMark id="navMark" width={72} height={42} />
            </NavMarkBox>
            <NavBrand>
              ASIA PLUS
              <Securities $size={8}>Securities</Securities>
            </NavBrand>
          </NavItem>
        )
      )}
      <NavItem>
        <Swirl viewBox="0 0 90 88" fill="none" stroke="#29c0f5">
          <path d={arc(46, 44, 39, -6, 272)} strokeWidth="8" />
          <path d={arc(46, 44, 26, 90, 365)} strokeWidth="6" />
          <path d={arc(46, 44, 14, 120, 400)} strokeWidth="6" />
        </Swirl>
      </NavItem>
    </Nav>
  </Page>
);

export default App;
